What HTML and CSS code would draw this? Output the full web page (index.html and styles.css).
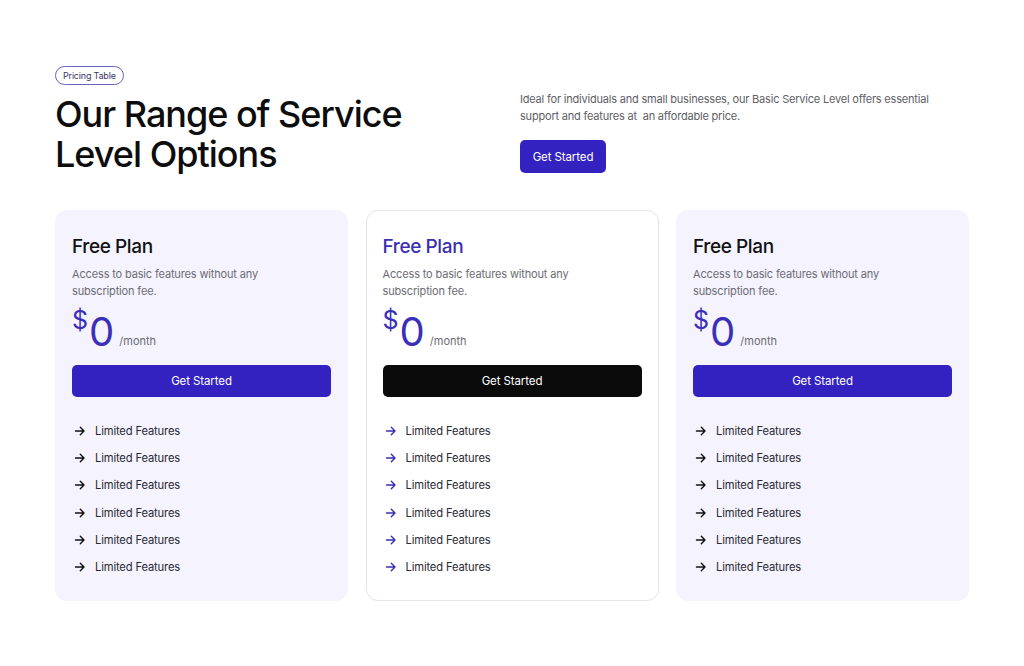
FILE: index.html
```html
<!DOCTYPE html>
<html>
<head>
<meta charset="utf-8">
<link rel="stylesheet" href="styles.css">
</head>
<body>
<main class="page">
  <header class="hero">
    <div class="hero-left">
      <span class="badge">Pricing Table</span>
      <h1 class="title">Our Range of Service<br>Level Options</h1>
    </div>
    <div class="hero-right">
      <p class="lead">Ideal for individuals and small businesses, our Basic Service Level offers essential support and features at&nbsp; an affordable price.</p>
      <button class="btn btn-hero">Get Started</button>
    </div>
  </header>

  <section class="cards">
    <article class="card">
      <h2 class="plan">Free Plan</h2>
      <p class="desc">Access to basic features without any<br>subscription fee.</p>
      <div class="price"><span class="cur">$</span><span class="amt">0</span><span class="per">/month</span></div>
      <button class="btn btn-card">Get Started</button>
      <ul class="feats">
        <li><svg class="arr" viewBox="0 0 12 12"><path d="M1.5 6h8.5M6.3 2.2 10 6l-3.7 3.8" fill="none" stroke="currentColor" stroke-width="1.4" stroke-linecap="round" stroke-linejoin="round"/></svg>Limited Features</li>
        <li><svg class="arr" viewBox="0 0 12 12"><path d="M1.5 6h8.5M6.3 2.2 10 6l-3.7 3.8" fill="none" stroke="currentColor" stroke-width="1.4" stroke-linecap="round" stroke-linejoin="round"/></svg>Limited Features</li>
        <li><svg class="arr" viewBox="0 0 12 12"><path d="M1.5 6h8.5M6.3 2.2 10 6l-3.7 3.8" fill="none" stroke="currentColor" stroke-width="1.4" stroke-linecap="round" stroke-linejoin="round"/></svg>Limited Features</li>
        <li><svg class="arr" viewBox="0 0 12 12"><path d="M1.5 6h8.5M6.3 2.2 10 6l-3.7 3.8" fill="none" stroke="currentColor" stroke-width="1.4" stroke-linecap="round" stroke-linejoin="round"/></svg>Limited Features</li>
        <li><svg class="arr" viewBox="0 0 12 12"><path d="M1.5 6h8.5M6.3 2.2 10 6l-3.7 3.8" fill="none" stroke="currentColor" stroke-width="1.4" stroke-linecap="round" stroke-linejoin="round"/></svg>Limited Features</li>
        <li><svg class="arr" viewBox="0 0 12 12"><path d="M1.5 6h8.5M6.3 2.2 10 6l-3.7 3.8" fill="none" stroke="currentColor" stroke-width="1.4" stroke-linecap="round" stroke-linejoin="round"/></svg>Limited Features</li>
      </ul>
    </article>

    <article class="card card-featured">
      <h2 class="plan">Free Plan</h2>
      <p class="desc">Access to basic features without any<br>subscription fee.</p>
      <div class="price"><span class="cur">$</span><span class="amt">0</span><span class="per">/month</span></div>
      <button class="btn btn-dark">Get Started</button>
      <ul class="feats">
        <li><svg class="arr" viewBox="0 0 12 12"><path d="M1.5 6h8.5M6.3 2.2 10 6l-3.7 3.8" fill="none" stroke="currentColor" stroke-width="1.4" stroke-linecap="round" stroke-linejoin="round"/></svg>Limited Features</li>
        <li><svg class="arr" viewBox="0 0 12 12"><path d="M1.5 6h8.5M6.3 2.2 10 6l-3.7 3.8" fill="none" stroke="currentColor" stroke-width="1.4" stroke-linecap="round" stroke-linejoin="round"/></svg>Limited Features</li>
        <li><svg class="arr" viewBox="0 0 12 12"><path d="M1.5 6h8.5M6.3 2.2 10 6l-3.7 3.8" fill="none" stroke="currentColor" stroke-width="1.4" stroke-linecap="round" stroke-linejoin="round"/></svg>Limited Features</li>
        <li><svg class="arr" viewBox="0 0 12 12"><path d="M1.5 6h8.5M6.3 2.2 10 6l-3.7 3.8" fill="none" stroke="currentColor" stroke-width="1.4" stroke-linecap="round" stroke-linejoin="round"/></svg>Limited Features</li>
        <li><svg class="arr" viewBox="0 0 12 12"><path d="M1.5 6h8.5M6.3 2.2 10 6l-3.7 3.8" fill="none" stroke="currentColor" stroke-width="1.4" stroke-linecap="round" stroke-linejoin="round"/></svg>Limited Features</li>
        <li><svg class="arr" viewBox="0 0 12 12"><path d="M1.5 6h8.5M6.3 2.2 10 6l-3.7 3.8" fill="none" stroke="currentColor" stroke-width="1.4" stroke-linecap="round" stroke-linejoin="round"/></svg>Limited Features</li>
      </ul>
    </article>

    <article class="card">
      <h2 class="plan">Free Plan</h2>
      <p class="desc">Access to basic features without any<br>subscription fee.</p>
      <div class="price"><span class="cur">$</span><span class="amt">0</span><span class="per">/month</span></div>
      <button class="btn btn-card">Get Started</button>
      <ul class="feats">
        <li><svg class="arr" viewBox="0 0 12 12"><path d="M1.5 6h8.5M6.3 2.2 10 6l-3.7 3.8" fill="none" stroke="currentColor" stroke-width="1.4" stroke-linecap="round" stroke-linejoin="round"/></svg>Limited Features</li>
        <li><svg class="arr" viewBox="0 0 12 12"><path d="M1.5 6h8.5M6.3 2.2 10 6l-3.7 3.8" fill="none" stroke="currentColor" stroke-width="1.4" stroke-linecap="round" stroke-linejoin="round"/></svg>Limited Features</li>
        <li><svg class="arr" viewBox="0 0 12 12"><path d="M1.5 6h8.5M6.3 2.2 10 6l-3.7 3.8" fill="none" stroke="currentColor" stroke-width="1.4" stroke-linecap="round" stroke-linejoin="round"/></svg>Limited Features</li>
        <li><svg class="arr" viewBox="0 0 12 12"><path d="M1.5 6h8.5M6.3 2.2 10 6l-3.7 3.8" fill="none" stroke="currentColor" stroke-width="1.4" stroke-linecap="round" stroke-linejoin="round"/></svg>Limited Features</li>
        <li><svg class="arr" viewBox="0 0 12 12"><path d="M1.5 6h8.5M6.3 2.2 10 6l-3.7 3.8" fill="none" stroke="currentColor" stroke-width="1.4" stroke-linecap="round" stroke-linejoin="round"/></svg>Limited Features</li>
        <li><svg class="arr" viewBox="0 0 12 12"><path d="M1.5 6h8.5M6.3 2.2 10 6l-3.7 3.8" fill="none" stroke="currentColor" stroke-width="1.4" stroke-linecap="round" stroke-linejoin="round"/></svg>Limited Features</li>
      </ul>
    </article>
  </section>
</main>
</body>
</html>
```

FILE: styles.css
```css
* { box-sizing: border-box; }
html, body { margin: 0; padding: 0; background: #ffffff; }
body {
  font-family: Inter, "Noto Sans", "Liberation Sans", sans-serif;
  color: #111111;
  width: 1024px;
  height: 666px;
  overflow: hidden;
}
.page {
  padding: 66px 55px 0 55px;
}
.hero {
  display: flex;
  align-items: flex-start;
}
.hero-left {
  width: 465px;
  display: flex;
  flex-direction: column;
  align-items: flex-start;
}
.badge {
  display: inline-block;
  font-size: 9px;
  line-height: 17px;
  padding: 0 7px;
  border: 1px solid #6a62c2;
  border-radius: 10px;
  color: #3b3566;
  letter-spacing: -0.2px;
}
.title {
  margin: 9px 0 0 0;
  font-size: 36px;
  line-height: 40px;
  font-weight: 500;
  letter-spacing: -1px;
  color: #0d0d0d;
}
.hero-right {
  padding-top: 25px;
  display: flex;
  flex-direction: column;
  align-items: flex-start;
}
.lead {
  margin: 0;
  width: 430px;
  font-size: 11px;
  line-height: 16.5px;
  color: #606066;
  letter-spacing: -0.2px;
}
.btn {
  border: none;
  font-family: inherit;
  font-size: 11.5px;
  color: #ffffff;
  cursor: pointer;
  letter-spacing: -0.1px;
}
.btn-hero {
  margin-top: 16px;
  width: 86px;
  height: 33px;
  border-radius: 5px;
  background: #3422c0;
}
.cards {
  margin-top: 36px;
  display: grid;
  grid-template-columns: 293px 293px 293px;
  column-gap: 17.5px;
}
.card {
  height: 391px;
  background: #f4f3fe;
  border-radius: 12px;
  padding: 24px 16px 0 16px;
  border: 1px solid #f4f3fe;
}
.card-featured {
  background: #ffffff;
  border: 1px solid #e4e4ea;
}
.plan {
  margin: 0;
  font-size: 19px;
  line-height: 24px;
  font-weight: 500;
  color: #111111;
  letter-spacing: -0.4px;
}
.card-featured .plan { color: #3a2fb0; }
.desc {
  margin: 7px 0 0 0;
  font-size: 11px;
  line-height: 16.5px;
  color: #6c6c74;
  letter-spacing: -0.15px;
}
.price {
  margin-top: 9px;
  display: flex;
  align-items: flex-end;
  height: 44px;
  color: #3a2fb8;
}
.cur {
  font-size: 25px;
  line-height: 25px;
  align-self: flex-start;
}
.amt {
  font-size: 40px;
  line-height: 40px;
  font-weight: 400;
  margin-left: 1px;
}
.per {
  font-size: 11px;
  color: #6c6c74;
  margin-left: 5px;
  margin-bottom: 4px;
}
.btn-card, .btn-dark {
  display: block;
  margin-top: 13px;
  width: 100%;
  height: 32px;
  border-radius: 5px;
  background: #3422c0;
}
.btn-dark { background: #0a0a0a; }
.feats {
  list-style: none;
  margin: 20px 0 0 0;
  padding: 0;
}
.feats li {
  display: flex;
  align-items: center;
  height: 27.3px;
  font-size: 11.2px;
  color: #2a2a33;
  letter-spacing: -0.15px;
}
.arr {
  width: 12px;
  height: 12px;
  margin: 0 9px 0 2px;
  color: #111111;
  flex: none;
}
.card-featured .arr { color: #3a2fb0; }
```
